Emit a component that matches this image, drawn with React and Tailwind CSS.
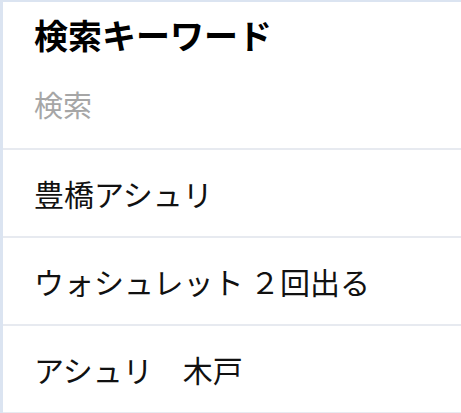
const rows = ['豊橋アシュリ', 'ウォシュレット ２回出る', 'アシュリ　木戸'];

const App = () => {
  return (
    <div
      className="w-[461px] h-[413px] overflow-hidden bg-white border-t-2 border-l-[3px] border-[#dbe4f1]"
      style={{ fontFamily: '"Noto Sans CJK JP", "Noto Sans", sans-serif' }}
    >
      <div className="pl-[31px] pt-[13px] pb-[24px] border-b-2 border-[#e7eaf0]">
        <h2 className="text-[34px] leading-[40px] font-bold text-black">検索キーワード</h2>
        <input
          className="mt-[29px] block w-full text-[29px] leading-[40px] outline-none placeholder:text-[#a6a6a6] bg-transparent"
          placeholder="検索"
        />
      </div>
      {rows.map((r) => (
        <div
          key={r}
          className="h-[88px] flex items-center pl-[31px] border-b-2 border-[#e7eaf0] text-[30px] text-[#111]"
        >
          {r}
        </div>
      ))}
    </div>
  );
};

export default App;
